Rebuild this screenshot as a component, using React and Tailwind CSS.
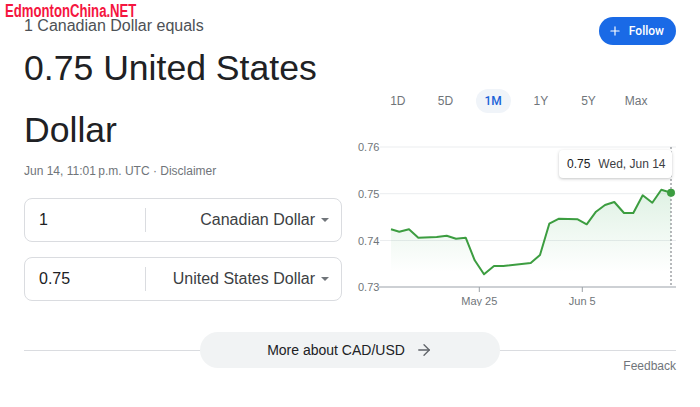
import React from 'react';
import { Plus, ArrowRight } from 'lucide-react';

const points = [
  [391, 228.3], [399.3, 230.7], [409, 228.3], [418.3, 236.7], [436.7, 236],
  [446.7, 234.7], [456, 237.7], [465.7, 236.7], [474.7, 259.3], [484, 273.3],
  [494, 265], [503.3, 265], [530.7, 262], [540, 254], [549.3, 222.7],
  [559, 217.7], [577.7, 218.3], [586.7, 223.3], [596, 210.7], [605, 204],
  [614.3, 201], [624, 212], [633.3, 212], [642.7, 194.3], [652.3, 201.7],
  [661.3, 188.7], [671, 191.7]
];

const ranges = ['1D', '5D', '1M', '1Y', '5Y', 'Max'];

const gridLines = [
  { label: '0.76', y: 146 },
  { label: '0.75', y: 192.7 },
  { label: '0.74', y: 239.5 },
];

const CurrencyBox = ({ amount, currency }) => (
  <div className="flex items-center h-[44px] border border-[#dadce0] rounded-[8px]">
    <div className="w-[120px] pl-[14px] text-[16px] text-[#202124]">{amount}</div>
    <div className="h-6 border-l border-[#dadce0]" />
    <div className="flex-1 flex items-center justify-end gap-[6px] pr-[12px] text-[16px] text-[#3c4043]">
      <span>{currency}</span>
      <span className="w-0 h-0 border-l-[4px] border-r-[4px] border-t-[4px] border-l-transparent border-r-transparent border-t-[#70757a]" />
    </div>
  </div>
);

const Chart = () => {
  const line = points.map(p => p.join(',')).join(' ');
  const area = `391,286 ${line} 671,286`;
  return (
    <div className="relative mt-[22px] w-[334px] h-[170px]">
      <svg width="334" height="170" viewBox="342 135 334 170" className="block">
        <defs>
          <linearGradient id="fillGreen" x1="0" y1="0" x2="0" y2="1">
            <stop offset="0" stopColor="#34a853" stopOpacity="0.16" />
            <stop offset="0.85" stopColor="#34a853" stopOpacity="0" />
          </linearGradient>
        </defs>
        {gridLines.map(g => (
          <g key={g.label}>
            <line x1="380" x2="676" y1={g.y} y2={g.y} stroke="#ebedef" strokeWidth="1" />
            <text x="358" y={g.y + 4} fontSize="11" fill="#70757a">{g.label}</text>
          </g>
        ))}
        <text x="358" y="290" fontSize="11" fill="#70757a">0.73</text>
        <polygon points={area} fill="url(#fillGreen)" />
        <line x1="379" x2="676" y1="286" y2="286" stroke="#bdc1c6" strokeWidth="1.5" />
        <line x1="479.3" x2="479.3" y1="286" y2="291" stroke="#9aa0a6" strokeWidth="1" />
        <line x1="582.3" x2="582.3" y1="286" y2="291" stroke="#9aa0a6" strokeWidth="1" />
        <text x="479.3" y="304" fontSize="11" fill="#70757a" textAnchor="middle">May 25</text>
        <text x="582.3" y="304" fontSize="11" fill="#70757a" textAnchor="middle">Jun 5</text>
        <line x1="671" x2="671" y1="146" y2="286" stroke="#70757a" strokeWidth="1" strokeDasharray="2 2" />
        <polyline points={line} fill="none" stroke="#3c9d40" strokeWidth="2" strokeLinejoin="round" />
        <circle cx="671" cy="191.7" r="4" fill="#3c9d40" />
      </svg>
      <div className="absolute left-[217px] top-[14px] w-[113px] h-[28px] flex items-center gap-[8px] pl-[8px] bg-white rounded-[4px] shadow-[0_1px_3px_rgba(60,64,67,0.3)] text-[12px]">
        <span className="text-[#202124]">0.75</span>
        <span className="text-[#3c4043]">Wed, Jun 14</span>
      </div>
    </div>
  );
};

export default function App() {
  return (
    <div className="relative w-[700px] h-[407px] bg-white px-6 font-['Liberation_Sans',Arial,sans-serif] overflow-hidden">
      <div className="flex items-start">
        <div className="w-[318px] pt-[14px]">
          <div className="text-[16px] leading-6 text-[#4d5156]">1 Canadian Dollar equals</div>
          <div className="mt-[-1px] text-[35.6px] leading-[62px] text-[#202124]">0.75 United States Dollar</div>
          <div className="mt-[2px] text-[12px] leading-4 text-[#70757a]">Jun 14, 11:01&#8239;p.m. UTC · Disclaimer</div>
          <div className="mt-[19px]">
            <CurrencyBox amount="1" currency="Canadian Dollar" />
          </div>
          <div className="mt-[15px]">
            <CurrencyBox amount="0.75" currency="United States Dollar" />
          </div>
        </div>
        <div className="flex-1 flex flex-col items-end pt-[17px]">
          <button className="flex items-center gap-[7px] h-[28px] pl-[9px] pr-[12px] rounded-full bg-[#1a6ae6] text-white text-[12px] font-['Roboto',sans-serif] font-medium">
            <Plus className="w-[14px] h-[14px]" strokeWidth={2} />
            <span>Follow</span>
          </button>
          <div className="self-start ml-[32px] mt-[44px] grid grid-cols-6 w-[286px]">
            {ranges.map(r => (
              <div key={r} className="flex justify-center">
                <span
                  className={
                    r === '1M'
                      ? 'h-[24px] px-[9px] flex items-center rounded-full bg-[#f0f4f9] text-[12px] text-[#1a62d8] font-["Roboto",sans-serif] font-medium'
                      : 'h-[24px] flex items-center text-[12px] text-[#70757a]'
                  }
                >
                  {r}
                </span>
              </div>
            ))}
          </div>
          <div className="self-start mt-[1px]">
            <Chart />
          </div>
        </div>
      </div>
      <div className="mt-[26px] flex items-center">
        <div className="flex-1 h-px bg-[#dadce0]" />
        <button className="w-[300px] h-[36px] flex items-center justify-center gap-[10px] rounded-full bg-[#f1f3f4] text-[14px] text-[#202124]">
          <span>More about CAD/USD</span>
          <ArrowRight className="w-[18px] h-[18px] text-[#5f6368]" strokeWidth={1.75} />
        </button>
        <div className="flex-1 h-px bg-[#dadce0]" />
      </div>
      <div className="-mt-[10px] flex justify-end text-[12px] leading-4 text-[#70757a]">Feedback</div>
      <div className="absolute left-[5px] top-[1px] origin-left scale-x-[0.73] text-[18px] leading-5 font-bold text-[#f5163f] whitespace-nowrap">
        EdmontonChina.NET
      </div>
    </div>
  );
}
